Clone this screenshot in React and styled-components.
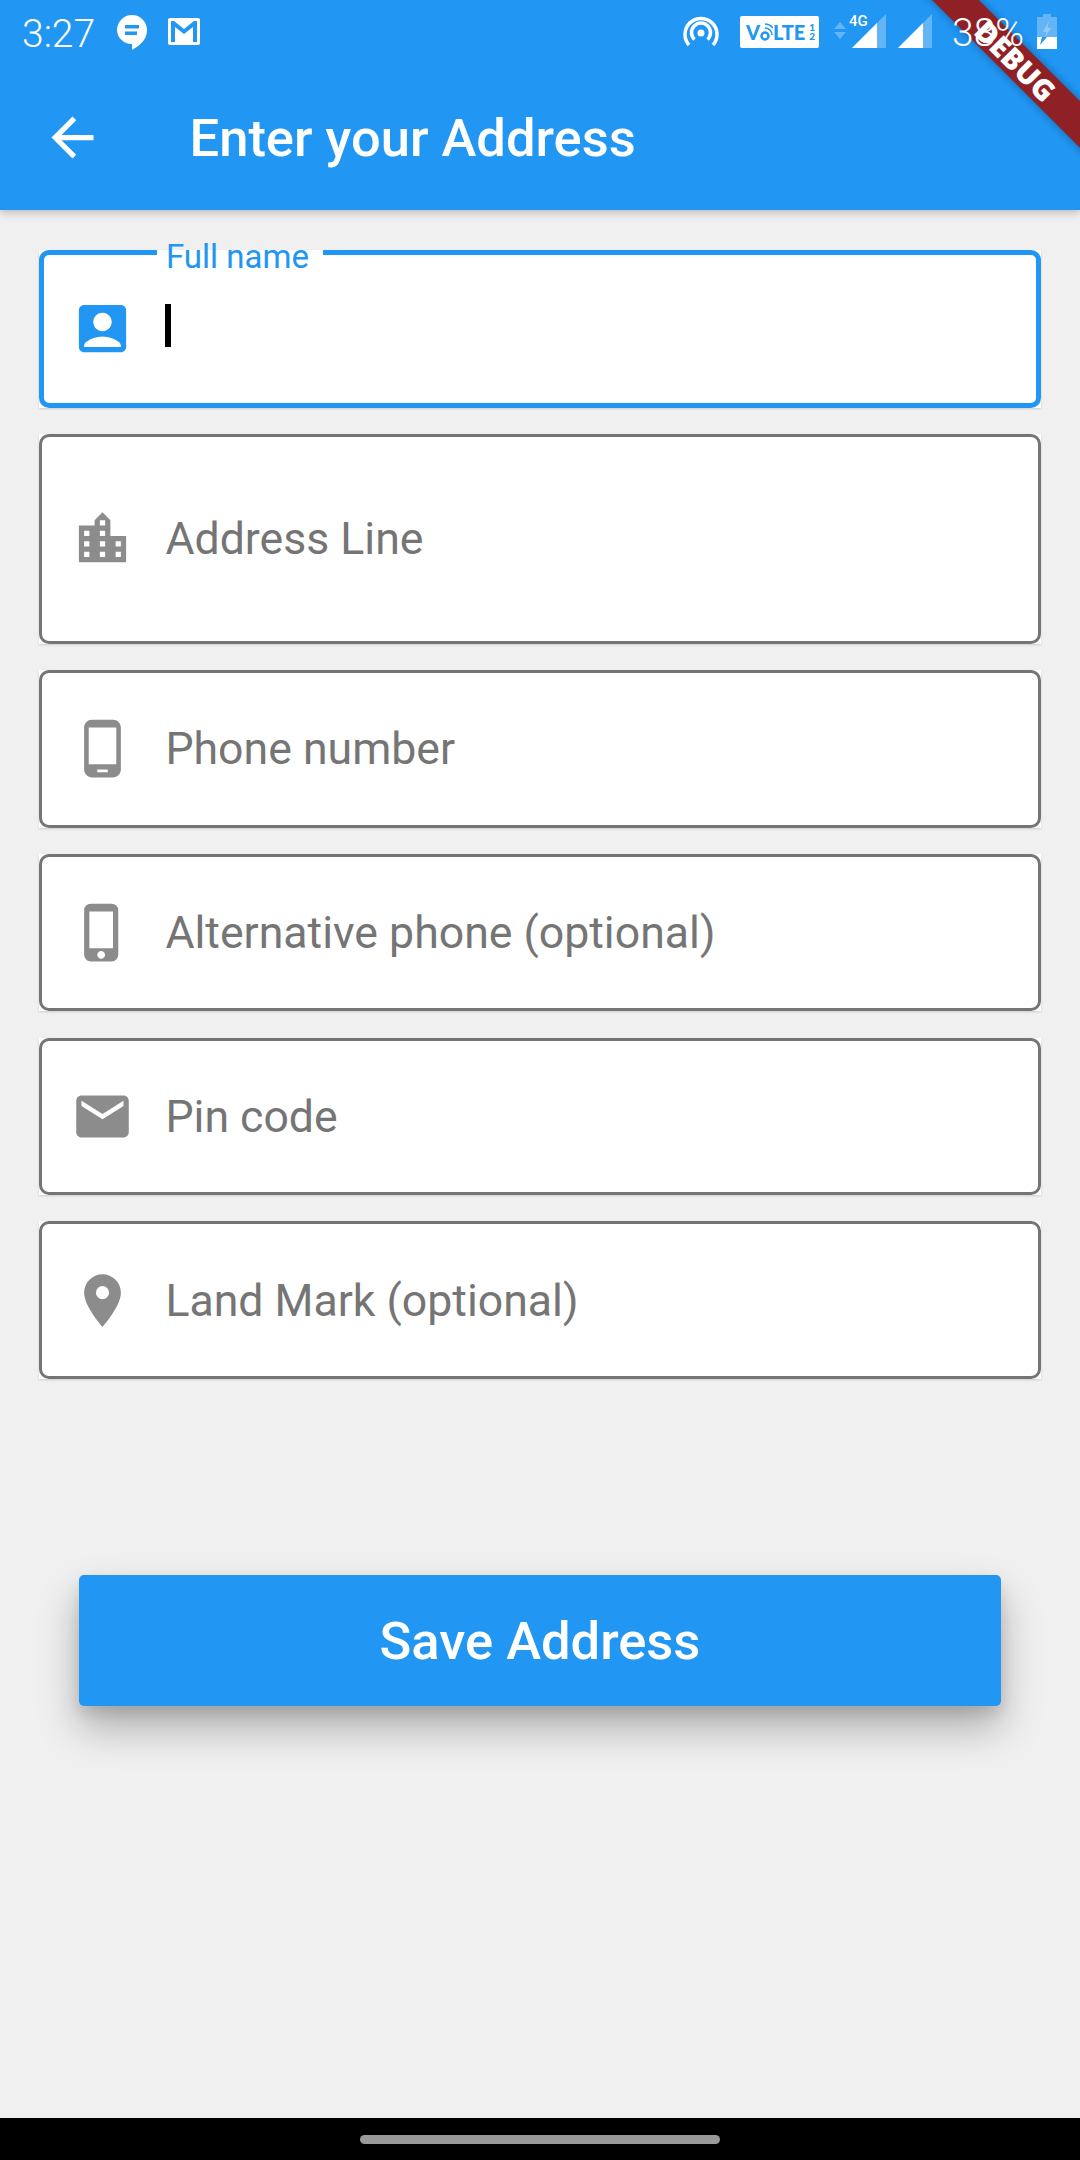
import React from 'react';
import styled, { createGlobalStyle } from 'styled-components';
import { MdAccountBox, MdArrowBack, MdEmail, MdLocationCity, MdLocationOn, MdPhoneAndroid, MdPhoneIphone } from 'react-icons/md';

const Global = createGlobalStyle`
    html, body { margin: 0; padding: 0; background: #f0f0f0; }
    #root { font-family: Roboto, "Liberation Sans", sans-serif; }
`

const Page = styled.div`
    width: 1080px;
    height: 2160px;
    display: flex;
    flex-direction: column;
    background: #f0f0f0;
    overflow: hidden;
    position: relative;
`

const Header = styled.header`
    height: 210px;
    flex: none;
    background: #2196f3;
    box-shadow: 0 3px 8px rgba(0, 0, 0, 0.22);
    color: #fff;
    display: flex;
    flex-direction: column;
    position: relative;
    overflow: hidden;
    z-index: 2;
`

const StatusBar = styled.div`
    height: 63px;
    display: flex;
    align-items: flex-start;
    justify-content: space-between;
    padding: 14px 23px 0 22px;
    box-sizing: border-box;
    position: relative;
    z-index: 1;
`

const StatusGroup = styled.div`
    display: flex;
    align-items: flex-start;
`

const Clock = styled.span`
    font-size: 39px;
    font-weight: 300;
    line-height: 40px;
    width: 94px;
`

const Percent = styled.span`
    font-size: 39px;
    font-weight: 300;
    line-height: 38px;
    margin: 0 15px 0 20px;
    width: 70px;
    white-space: nowrap;
`

const Volte = styled.span`
    width: 79px;
    height: 32px;
    margin: 2px 15px 0 21px;
    padding-left: 6px;
    box-sizing: border-box;
    display: flex;
    align-items: center;
    background: #fff;
    border-radius: 2px;
    color: #2196f3;
    font-family: Lato, sans-serif;
    font-size: 20px;
    font-weight: 900;
    line-height: 1;
    white-space: nowrap;
`

const VolteFraction = styled.span`
    display: flex;
    flex-direction: column;
    margin-left: 4px;
    font-size: 10px;
    line-height: 9px;
`

const SignalBox = styled.span`
    position: relative;
    width: 34px;
    height: 34px;
    margin-left: ${p => p.$gap}px;
`

const FourG = styled.span`
    position: absolute;
    left: -3px;
    top: 0;
    font-size: 15px;
    font-weight: 500;
    line-height: 14px;
`

const AppBar = styled.div`
    flex: 1;
    display: flex;
    align-items: center;
    padding: 2px 0 0 41px;
`

const BackIcon = styled(MdArrowBack)`
    width: 63px;
    height: 63px;
    flex: none;
`

const Title = styled.h1`
    margin: 2px 0 0 85.5px;
    font-size: 52.5px;
    font-weight: 500;
    line-height: 1;
    white-space: nowrap;
`

const Ribbon = styled.div`
    position: absolute;
    top: 44px;
    left: 876px;
    width: 280px;
    height: 33px;
    background: #8f2025;
    box-shadow: 0 0 9px rgba(0, 0, 0, 0.35);
    transform: rotate(45deg);
    color: #fff;
    font-family: "Noto Sans", sans-serif;
    font-size: 29px;
    font-weight: 900;
    line-height: 33px;
    text-align: center;
`

const Main = styled.main`
    flex: 1;
    display: flex;
    flex-direction: column;
    padding: 40px 39.4px 0;
`

const Form = styled.div`
    display: flex;
    flex-direction: column;
    gap: 26.25px;
`

const Field = styled.div`
    height: ${p => (p.$tall ? 210 : 157.5)}px;
    background: #fff;
    box-shadow: 0 1px 2px rgba(0, 0, 0, 0.14);
    position: relative;
`

const Outline = styled.div`
    height: 100%;
    box-sizing: border-box;
    border: ${p => (p.$focused ? '5px solid #2196f3' : '3px solid #757575')};
    border-radius: 10px;
    display: flex;
    align-items: center;
    padding-left: ${p => (p.$focused ? 27 : 29)}px;
    & > svg {
        width: 63px;
        height: 63px;
        flex: none;
        color: ${p => (p.$focused ? '#2196f3' : '#8c8c8c')};
    }
`

const Placeholder = styled.span`
    margin: 2px 0 0 31px;
    color: #757575;
    font-size: 44.625px;
    line-height: 1;
    white-space: nowrap;
`

const Cursor = styled.span`
    width: 6px;
    height: 43px;
    margin: -7px 0 0 31px;
    background: #000;
`

const FloatLabel = styled.label`
    position: absolute;
    left: 117.6px;
    top: -12px;
    padding: 0 14px 0 9px;
    height: 36px;
    color: #2196f3;
    font-size: 33px;
    line-height: 38px;
    background: linear-gradient(to bottom, transparent 12px, #fff 12px);
`

const SaveButton = styled.button`
    flex: none;
    width: 922.5px;
    height: 131.25px;
    margin: 196.25px 0 0 39.35px;
    border: 0;
    border-radius: 5px;
    background: #2196f3;
    color: #fff;
    font-family: inherit;
    font-size: 52.5px;
    font-weight: 500;
    box-shadow: 0 22px 40px rgba(0, 0, 0, 0.28), 0 8px 14px rgba(0, 0, 0, 0.1);
`

const NavBar = styled.div`
    height: 42px;
    flex: none;
    background: #000;
    display: flex;
    justify-content: center;
    padding-top: 17px;
    box-sizing: border-box;
`

const NavPill = styled.div`
    width: 360px;
    height: 9px;
    border-radius: 5px;
    background: #999;
`

const fields = [
    { label: 'Address Line', icon: MdLocationCity, tall: true },
    { label: 'Phone number', icon: MdPhoneAndroid },
    { label: 'Alternative phone (optional)', icon: MdPhoneIphone },
    { label: 'Pin code', icon: MdEmail },
    { label: 'Land Mark (optional)', icon: MdLocationOn },
]

const MessageIcon = () => (
    <svg width="32" height="37" viewBox="0 0 32 37" style={{ marginRight: 20 }}>
        <path fill="#fff" fillRule="evenodd" d="M16 1a15 15 0 0 1 15 15c0 9-6 15-15 20v-6A14.500 14.500 0 0 1 1 16 15 15 0 0 1 16 1zM9 11v3.500h14V11zM9 17.500V21h12v-3.500z" />
    </svg>
)

const MailIcon = () => (
    <svg width="32" height="28" viewBox="0 0 32 28" style={{ marginTop: 4 }}>
        <rect x="0" y="0" width="32" height="27" rx="2" fill="#fff" />
        <path fill="#2196f3" d="M3 3h3l10 8 10-8h3v21h-4V9l-9 7-9-7v15H3z" />
    </svg>
)

const HotspotIcon = () => (
    <svg width="36" height="32" viewBox="0 0 36 32" style={{ marginTop: 2 }} fill="none" stroke="#fff" strokeWidth="3.500">
        <path d="M6 29a16 16 0 1 1 24 0" />
        <path d="M11.500 23.500a9.500 9.500 0 1 1 13 0" />
        <circle cx="18" cy="17" r="3.500" fill="#fff" stroke="none" />
    </svg>
)

const VolteWifi = () => (
    <svg width="13" height="20" viewBox="0 0 13 20">
        <circle cx="5" cy="14" r="3.500" fill="none" stroke="#2196f3" strokeWidth="2.500" />
        <path fill="none" stroke="#2196f3" strokeWidth="1.500" d="M5 6a7 7 0 0 1 7 7M5 2a11 11 0 0 1 8 4" />
    </svg>
)

const DataArrows = () => (
    <svg width="12" height="18" viewBox="0 0 12 18" style={{ marginTop: 8 }}>
        <path fill="#fff" fillOpacity="0.3" d="M6 0l6 7H0zM0 10h12l-6 7z" />
    </svg>
)

const Signal = () => (
    <svg width="34" height="34" viewBox="0 0 34 34">
        <path fill="#fff" fillOpacity="0.3" d="M34 0v34H0z" />
        <path fill="#fff" d="M25 9v25H0z" />
    </svg>
)

const BatteryIcon = () => (
    <svg width="20" height="35" viewBox="0 0 20 35">
        <path fill="#fff" fillOpacity="0.3" d="M6 0h8v3h6v20H0V3h6z" />
        <path fill="#fff" d="M0 23h5l-2 8 7-8h10v12H0z" />
        <path fill="#fff" fillOpacity="0.3" d="M12 7l-6 11h3.500L8 23l6-9h-3.500z" />
    </svg>
)

const App = () => {
    return (
        <Page>
            <Global />
            <Header>
                <StatusBar>
                    <StatusGroup>
                        <Clock>3:27</Clock>
                        <MessageIcon />
                        <MailIcon />
                    </StatusGroup>
                    <StatusGroup>
                        <HotspotIcon />
                        <Volte>
                            V<VolteWifi />LTE
                            <VolteFraction><span>1</span><span>2</span></VolteFraction>
                        </Volte>
                        <DataArrows />
                        <SignalBox $gap={6}>
                            <Signal />
                            <FourG>4G</FourG>
                        </SignalBox>
                        <SignalBox $gap={12}>
                            <Signal />
                        </SignalBox>
                        <Percent>38%</Percent>
                        <BatteryIcon />
                    </StatusGroup>
                </StatusBar>
                <AppBar>
                    <BackIcon />
                    <Title>Enter your Address</Title>
                </AppBar>
                <Ribbon>DEBUG</Ribbon>
            </Header>
            <Main>
                <Form>
                    <Field>
                        <FloatLabel>Full name</FloatLabel>
                        <Outline $focused>
                            <MdAccountBox />
                            <Cursor />
                        </Outline>
                    </Field>
                    {fields.map(({ label, icon: Icon, tall }) => (
                        <Field key={label} $tall={tall}>
                            <Outline>
                                <Icon />
                                <Placeholder>{label}</Placeholder>
                            </Outline>
                        </Field>
                    ))}
                </Form>
                <SaveButton>Save Address</SaveButton>
            </Main>
            <NavBar>
                <NavPill />
            </NavBar>
        </Page>
    )
}

export default App;
